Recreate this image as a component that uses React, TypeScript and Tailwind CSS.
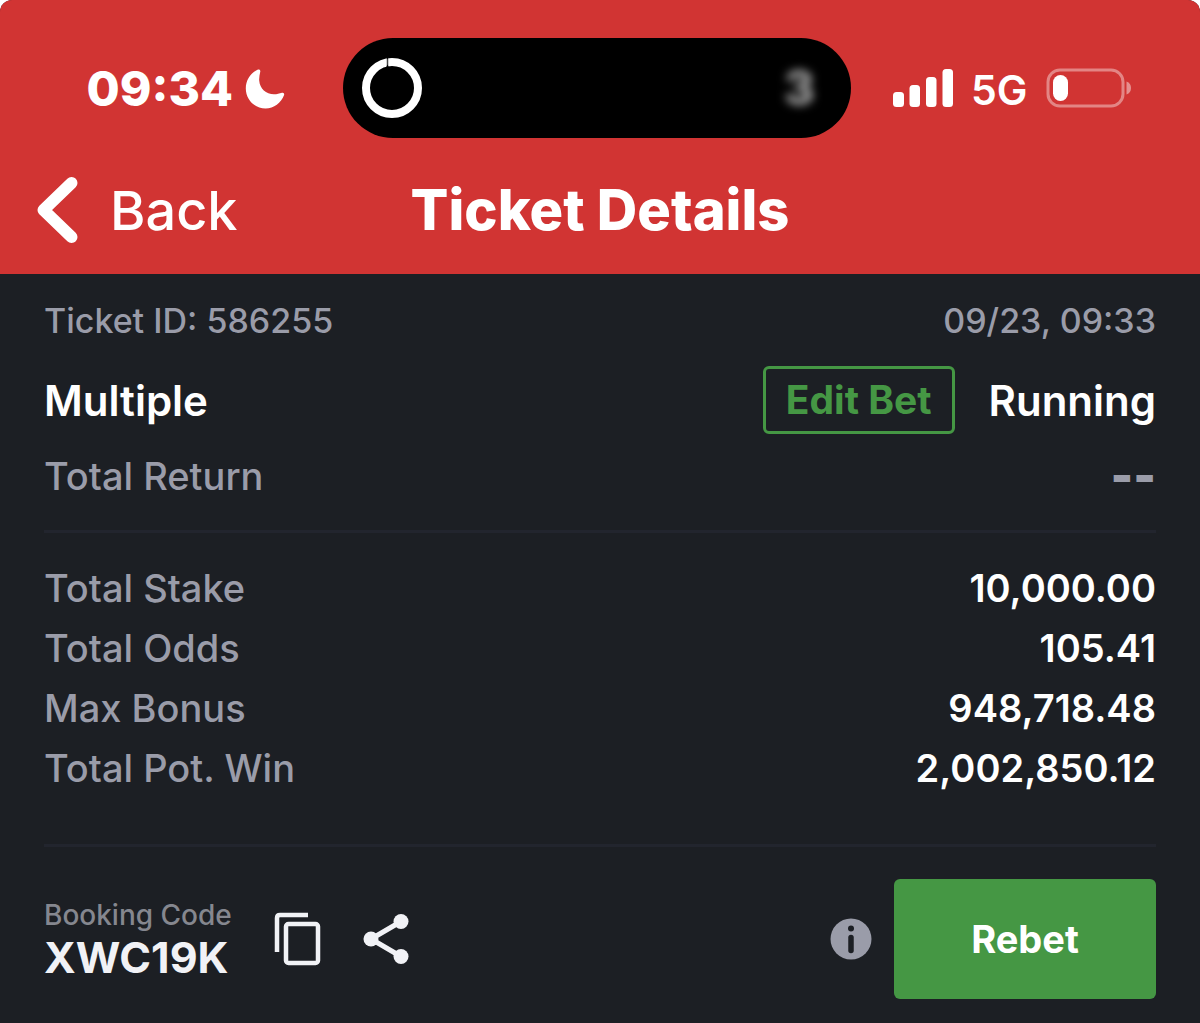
import type { ReactNode } from "react";

const stats = [
  { label: "Total Stake", value: "10,000.00" },
  { label: "Total Odds", value: "105.41" },
  { label: "Max Bonus", value: "948,718.48" },
  { label: "Total Pot. Win", value: "2,002,850.12" },
];

function StatusBar() {
  return (
    <div className="grid grid-cols-[1fr_508px_1fr] items-center pt-[38px] pr-1.5">
      <div className="flex items-center justify-end gap-3 pr-14">
        <span className="pt-0.5 text-5xl font-extrabold">09:34</span>
        <svg width="42" height="42" viewBox="0 0 42 42" fill="currentColor" aria-hidden="true">
          <path d="M12.500 2.800C13.800 2 15.600 2.800 15.300 4.500C14.600 7.500 14 10.500 14.200 13.500C14.800 21.500 21 27.300 29 27.300C31.800 27.300 34.500 26.600 37 25.800C38.800 25.300 39.600 26.800 39 28.200C36 35.800 29 41.500 20.500 41.500C9.500 41.500 .8 32.500 .8 21.500C.8 13.300 5.500 6.200 12.500 2.800Z" />
        </svg>
      </div>

      <div className="flex h-[100px] items-center justify-between rounded-full bg-black pr-9 pl-[18px]">
        <svg width="62" height="62" viewBox="0 0 62 62" fill="none" aria-hidden="true">
          <circle cx="31" cy="31" r="26" stroke="#fff" strokeWidth="8" />
          <path d="M26.500 0.500V9.500" stroke="#444" strokeWidth="1.500" />
          <path d="M25.500 0L26.500 2.500L27.500 0ZM25 10.500L26.500 7.500L28 10.500Z" fill="#000" />
        </svg>
        <span className="text-5xl font-extrabold text-neutral-400 blur-[5px]">3</span>
      </div>

      <div className="flex items-center gap-[18px] pl-[42px]">
        <svg width="60" height="38" viewBox="0 0 60 38" fill="currentColor" aria-hidden="true">
          <rect x="0" y="23" width="11" height="15" rx="3.500" />
          <rect x="16.500" y="16" width="10.500" height="22" rx="3.500" />
          <rect x="33" y="8" width="10.500" height="30" rx="3.500" />
          <rect x="49.500" y="0" width="10.500" height="38" rx="3.500" />
        </svg>
        <span className="pt-1 text-[41px] leading-12 font-semibold">5G</span>
        <svg width="86" height="40" viewBox="0 0 86 40" fill="none" aria-hidden="true">
          <rect x="2" y="2" width="75" height="36" rx="12" stroke="#fff" strokeOpacity=".4" strokeWidth="3" />
          <rect x="7" y="7" width="15" height="26" rx="7.500" fill="#fff" />
          <path d="M80.500 13.500C83.500 14.500 85 17 85 20C85 23 83.500 25.500 80.500 26.500Z" fill="#fff" fillOpacity=".45" />
        </svg>
      </div>
    </div>
  );
}

function NavBar() {
  return (
    <nav className="grid h-[136px] grid-cols-[1fr_auto_1fr] items-center pt-2">
      <button type="button" className="flex items-center gap-8 justify-self-start pl-9 text-[54px] font-medium">
        <svg width="42" height="68" viewBox="0 0 42 68" fill="none" aria-hidden="true">
          <path d="M35.500 7L7.500 34L35.500 61" stroke="currentColor" strokeWidth="12" strokeLinecap="round" strokeLinejoin="round" />
        </svg>
        Back
      </button>
      <h1 className="text-[56px] font-extrabold">Ticket Details</h1>
    </nav>
  );
}

function Row({ label, children }: { label: string; children: ReactNode }) {
  return (
    <div className="flex h-[60px] items-center justify-between text-[38px]">
      <dt className="font-medium text-[#9a9ca9]">{label}</dt>
      <dd className="font-semibold">{children}</dd>
    </div>
  );
}

export default function App() {
  return (
    <div className="min-h-screen bg-white font-[Inter,sans-serif] text-white">
      <div className="flex min-h-screen flex-col overflow-hidden rounded-t-xl bg-[#1c1f24]">
        <header className="bg-[#d13433]">
          <StatusBar />
          <NavBar />
        </header>

        <main className="px-11 pt-6">
          <div className="flex justify-between text-[34px] leading-[46px] font-medium text-[#9a9ca9]">
            <p>Ticket ID: 586255</p>
            <time>09/23, 09:33</time>
          </div>

          <div className="mt-[22px] flex h-[68px] items-center justify-between text-[42px] font-semibold">
            <h2>Multiple</h2>
            <div className="flex items-center gap-[34px]">
              <button
                type="button"
                className="h-[68px] rounded-md border-3 border-[#459744] px-5 text-[39px] font-bold text-[#459744]"
              >
                Edit Bet
              </button>
              <span>Running</span>
            </div>
          </div>

          <dl className="mt-3">
            <Row label="Total Return">
              <span className="text-5xl leading-[60px] font-black text-[#9a9ca9]">--</span>
            </Row>
          </dl>

          <hr className="mt-6 border-t-3 border-[#22252e]" />

          <dl className="mt-[25px]">
            {stats.map((stat) => (
              <Row key={stat.label} label={stat.label}>
                {stat.value}
              </Row>
            ))}
          </dl>

          <hr className="mt-[46px] border-t-3 border-[#22252e]" />

          <div className="mt-8 flex items-center justify-between pb-6">
            <div className="flex items-center gap-[41px]">
              <div>
                <p className="text-[28px] leading-9 font-medium text-[#85878f]">Booking Code</p>
                <p className="text-[43px] leading-12 font-bold text-[#f1f2f6]">XWC19K</p>
              </div>
              <button type="button" aria-label="Copy booking code">
                <svg width="48" height="54" viewBox="0 0 48 54" fill="none" stroke="#f1f2f6" strokeWidth="4.500" aria-hidden="true">
                  <path d="M35 3H7Q4 3 4 6V40" />
                  <rect x="13" y="12" width="32" height="39" rx="2.500" />
                </svg>
              </button>
              <button type="button" aria-label="Share">
                <svg width="48" height="52" viewBox="0 0 48 52" fill="#f1f2f6" aria-hidden="true">
                  <path d="M39 8.500L9 26L39 43.500" fill="none" stroke="#f1f2f6" strokeWidth="5" />
                  <circle cx="39" cy="8.500" r="7.500" />
                  <circle cx="9" cy="26" r="7.500" />
                  <circle cx="39" cy="43.500" r="7.500" />
                </svg>
              </button>
            </div>

            <div className="flex items-center gap-[22px]">
              <button type="button" aria-label="Rebet info">
                <svg width="42" height="42" viewBox="0 0 42 42" aria-hidden="true">
                  <circle cx="21" cy="21" r="20.500" fill="#9a9ca9" />
                  <circle cx="21" cy="10.500" r="3" fill="#1c1f24" />
                  <path d="M21 19.500V32.500" stroke="#1c1f24" strokeWidth="5.500" strokeLinecap="round" />
                </svg>
              </button>
              <button type="button" className="h-[120px] w-[262px] rounded-md bg-[#459744] text-[38px] font-bold">
                Rebet
              </button>
            </div>
          </div>
        </main>
      </div>
    </div>
  );
}
